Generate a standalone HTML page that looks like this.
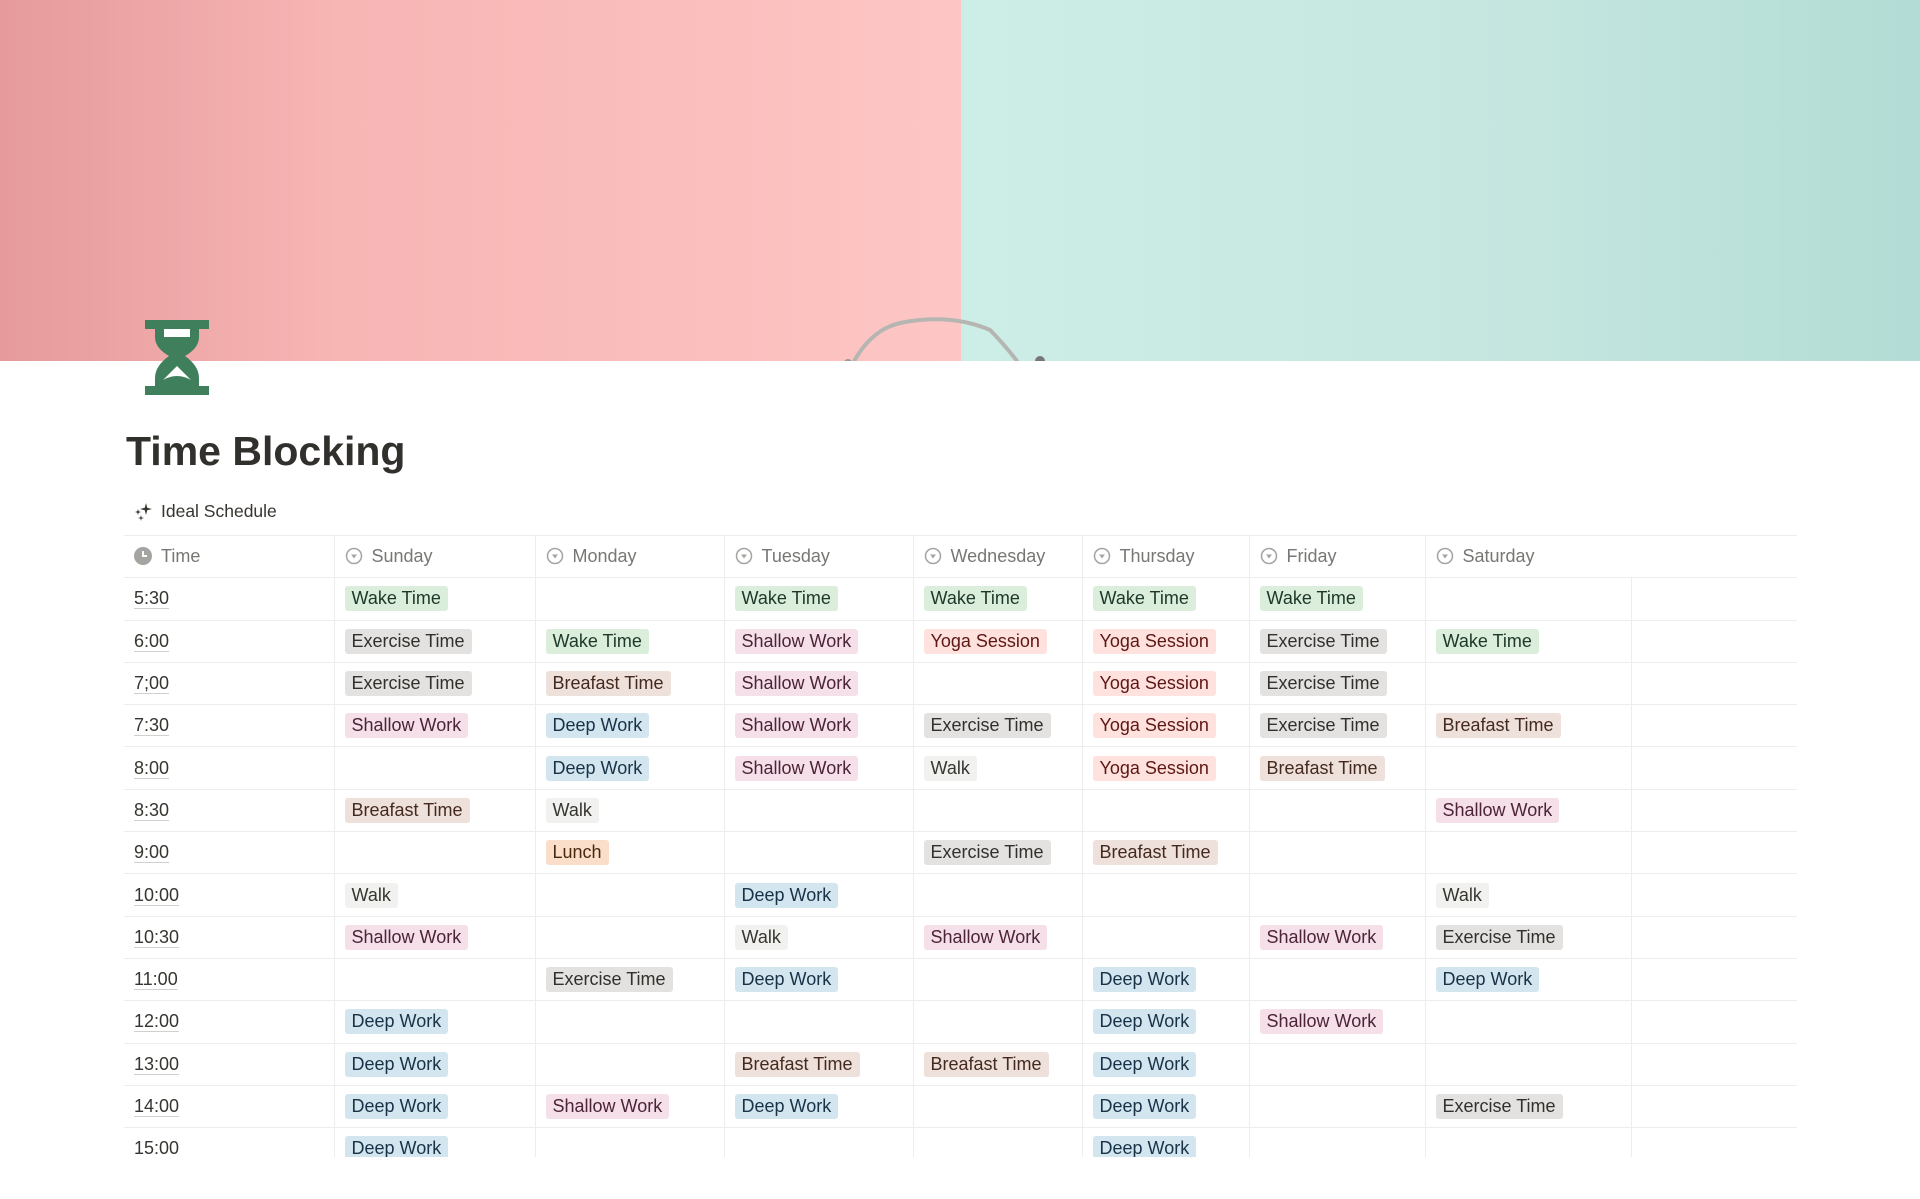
<!DOCTYPE html>
<html><head><meta charset="utf-8"><style>
*{margin:0;padding:0;box-sizing:border-box}
body{width:1920px;height:1199px;overflow:hidden;background:#fff;font-family:"Liberation Sans",sans-serif;color:#37352f;position:relative}
.cover{position:absolute;left:0;top:0;width:1920px;height:361px;overflow:hidden}
.pink{position:absolute;left:0;top:0;width:961px;height:361px;background:linear-gradient(90deg,#e69a9c 0%,#f7b5b4 35%,#fdc6c4 100%)}
.mint{position:absolute;left:961px;top:0;width:959px;height:361px;background:linear-gradient(90deg,#cdeee6 0%,#c4e6df 60%,#b2dcd5 100%)}
.title{position:absolute;left:126px;top:428px;font-size:41px;font-weight:bold;color:#32302c}
.ideal{position:absolute;left:133px;top:501px;font-size:17.5px;color:#37352f;display:flex;align-items:center;gap:8px}
.wrap{position:absolute;left:124px;top:535px;width:1673px;height:622px;overflow:hidden}
table{border-collapse:collapse;table-layout:fixed;width:1673px}
td,th{height:42.3px;border-bottom:1px solid #ededeb;border-left:1px solid #ededeb;text-align:left;font-weight:normal;padding:0 0 0 10px;font-size:18px;white-space:nowrap;vertical-align:middle}
tr:first-child th{border-top:1px solid #ededeb}
td:first-child,th:first-child{border-left:none;padding-left:10px}
th{color:#787774}
th svg{vertical-align:-3px;margin-right:9px}
.tm{text-decoration:underline;text-decoration-color:#d0d0ce;text-underline-offset:4px;color:#37352f}
.t{display:inline-block;padding:0 7px;height:25px;line-height:25px;border-radius:3px;font-size:18px}
.g{background:#dbeddb;color:#1c3829}.x{background:#e3e2e0;color:#32302c}.p{background:#f5e0e9;color:#4c2337}
.r{background:#ffe2dd;color:#5d1715}.b{background:#eee0da;color:#442a1e}.u{background:#d3e5ef;color:#183347}
.o{background:#fadec9;color:#49290e}.w{background:#f1f1ef;color:#37352f}
</style></head><body>
<div class="cover"><div class="pink"></div><div class="mint"></div>
<svg style="position:absolute;left:840px;top:305px" width="220" height="60"><path d="M12 60 Q30 25 60 18 Q110 8 150 25 Q165 40 180 60" fill="none" stroke="#b5b5b2" stroke-width="4"/><circle cx="200" cy="56" r="5" fill="#777"/><circle cx="8" cy="58" r="4" fill="#999"/></svg>
</div>
<svg style="position:absolute;left:145px;top:320px" width="64" height="75" viewBox="0 0 64 75"><path fill="#3f7f5b" d="M0 0H64V9H54V17Q54 28 40 36Q54 46 54 58V66H64V75H0V66H10V58Q10 46 24 36Q10 28 10 17V9H0Z"/><path fill="#fff" d="M19 9H45V17H19Z"/><path fill="#fff" d="M18 60L32 46L46 60Q32 52 18 60Z"/></svg>
<div class="title">Time Blocking</div>
<div class="ideal"><svg width="20" height="20" viewBox="0 0 20 20" fill="#37352f"><path d="M13 1L14.2 5.8 19 7 14.2 8.2 13 13 11.8 8.2 7 7 11.8 5.8Z"/><path d="M5 7L5.7 9.3 8 10 5.7 10.7 5 13 4.3 10.7 2 10 4.3 9.3Z"/><path d="M8 13L8.6 15.4 11 16 8.6 16.6 8 19 7.4 16.6 5 16 7.4 15.4Z"/></svg><span>Ideal Schedule</span></div>
<div class="wrap"><table>
<colgroup><col style="width:210px"><col style="width:201px"><col style="width:189px"><col style="width:189px"><col style="width:169px"><col style="width:167px"><col style="width:176px"><col style="width:206px"><col style="width:166px"></colgroup>
<tr><th><svg width="18" height="18" viewBox="0 0 18 18"><circle cx="9" cy="9" r="9" fill="#a5a4a1"/><path d="M9 4V9H13" stroke="#fff" stroke-width="2" fill="none"/></svg>Time</th>
<th><svg width="18" height="18" viewBox="0 0 18 18"><circle cx="9" cy="9" r="7.5" fill="none" stroke="#a5a4a1" stroke-width="1.5"/><path d="M6 7.5H12L9 11.5Z" fill="#a5a4a1"/></svg>Sunday</th>
<th><svg width="18" height="18" viewBox="0 0 18 18"><circle cx="9" cy="9" r="7.5" fill="none" stroke="#a5a4a1" stroke-width="1.5"/><path d="M6 7.5H12L9 11.5Z" fill="#a5a4a1"/></svg>Monday</th>
<th><svg width="18" height="18" viewBox="0 0 18 18"><circle cx="9" cy="9" r="7.5" fill="none" stroke="#a5a4a1" stroke-width="1.5"/><path d="M6 7.5H12L9 11.5Z" fill="#a5a4a1"/></svg>Tuesday</th>
<th><svg width="18" height="18" viewBox="0 0 18 18"><circle cx="9" cy="9" r="7.5" fill="none" stroke="#a5a4a1" stroke-width="1.5"/><path d="M6 7.5H12L9 11.5Z" fill="#a5a4a1"/></svg>Wednesday</th>
<th><svg width="18" height="18" viewBox="0 0 18 18"><circle cx="9" cy="9" r="7.5" fill="none" stroke="#a5a4a1" stroke-width="1.5"/><path d="M6 7.5H12L9 11.5Z" fill="#a5a4a1"/></svg>Thursday</th>
<th><svg width="18" height="18" viewBox="0 0 18 18"><circle cx="9" cy="9" r="7.5" fill="none" stroke="#a5a4a1" stroke-width="1.5"/><path d="M6 7.5H12L9 11.5Z" fill="#a5a4a1"/></svg>Friday</th>
<th colspan="2"><svg width="18" height="18" viewBox="0 0 18 18"><circle cx="9" cy="9" r="7.5" fill="none" stroke="#a5a4a1" stroke-width="1.5"/><path d="M6 7.5H12L9 11.5Z" fill="#a5a4a1"/></svg>Saturday</th></tr>
<tr><td class="tm">5:30</td><td><span class="t g">Wake Time</span></td><td></td><td><span class="t g">Wake Time</span></td><td><span class="t g">Wake Time</span></td><td><span class="t g">Wake Time</span></td><td><span class="t g">Wake Time</span></td><td></td><td></td></tr>
<tr><td class="tm">6:00</td><td><span class="t x">Exercise Time</span></td><td><span class="t g">Wake Time</span></td><td><span class="t p">Shallow Work</span></td><td><span class="t r">Yoga Session</span></td><td><span class="t r">Yoga Session</span></td><td><span class="t x">Exercise Time</span></td><td><span class="t g">Wake Time</span></td><td></td></tr>
<tr><td class="tm">7;00</td><td><span class="t x">Exercise Time</span></td><td><span class="t b">Breafast Time</span></td><td><span class="t p">Shallow Work</span></td><td></td><td><span class="t r">Yoga Session</span></td><td><span class="t x">Exercise Time</span></td><td></td><td></td></tr>
<tr><td class="tm">7:30</td><td><span class="t p">Shallow Work</span></td><td><span class="t u">Deep Work</span></td><td><span class="t p">Shallow Work</span></td><td><span class="t x">Exercise Time</span></td><td><span class="t r">Yoga Session</span></td><td><span class="t x">Exercise Time</span></td><td><span class="t b">Breafast Time</span></td><td></td></tr>
<tr><td class="tm">8:00</td><td></td><td><span class="t u">Deep Work</span></td><td><span class="t p">Shallow Work</span></td><td><span class="t w">Walk</span></td><td><span class="t r">Yoga Session</span></td><td><span class="t b">Breafast Time</span></td><td></td><td></td></tr>
<tr><td class="tm">8:30</td><td><span class="t b">Breafast Time</span></td><td><span class="t w">Walk</span></td><td></td><td></td><td></td><td></td><td><span class="t p">Shallow Work</span></td><td></td></tr>
<tr><td class="tm">9:00</td><td></td><td><span class="t o">Lunch</span></td><td></td><td><span class="t x">Exercise Time</span></td><td><span class="t b">Breafast Time</span></td><td></td><td></td><td></td></tr>
<tr><td class="tm">10:00</td><td><span class="t w">Walk</span></td><td></td><td><span class="t u">Deep Work</span></td><td></td><td></td><td></td><td><span class="t w">Walk</span></td><td></td></tr>
<tr><td class="tm">10:30</td><td><span class="t p">Shallow Work</span></td><td></td><td><span class="t w">Walk</span></td><td><span class="t p">Shallow Work</span></td><td></td><td><span class="t p">Shallow Work</span></td><td><span class="t x">Exercise Time</span></td><td></td></tr>
<tr><td class="tm">11:00</td><td></td><td><span class="t x">Exercise Time</span></td><td><span class="t u">Deep Work</span></td><td></td><td><span class="t u">Deep Work</span></td><td></td><td><span class="t u">Deep Work</span></td><td></td></tr>
<tr><td class="tm">12:00</td><td><span class="t u">Deep Work</span></td><td></td><td></td><td></td><td><span class="t u">Deep Work</span></td><td><span class="t p">Shallow Work</span></td><td></td><td></td></tr>
<tr><td class="tm">13:00</td><td><span class="t u">Deep Work</span></td><td></td><td><span class="t b">Breafast Time</span></td><td><span class="t b">Breafast Time</span></td><td><span class="t u">Deep Work</span></td><td></td><td></td><td></td></tr>
<tr><td class="tm">14:00</td><td><span class="t u">Deep Work</span></td><td><span class="t p">Shallow Work</span></td><td><span class="t u">Deep Work</span></td><td></td><td><span class="t u">Deep Work</span></td><td></td><td><span class="t x">Exercise Time</span></td><td></td></tr>
<tr><td class="tm">15:00</td><td><span class="t u">Deep Work</span></td><td></td><td></td><td></td><td><span class="t u">Deep Work</span></td><td></td><td></td><td></td></tr>
</table></div>
</body></html>
